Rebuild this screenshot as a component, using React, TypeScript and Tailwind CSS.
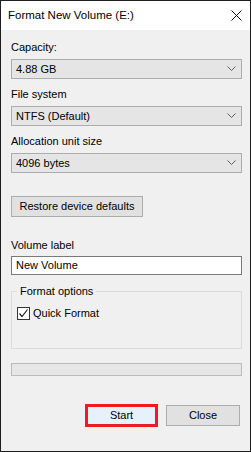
import React from 'react';

// Windows 10 style "Format" dialog
const FONT = "font-['Liberation_Sans',Arial,sans-serif]";

const Chevron = () => (
  <svg width="9" height="6" viewBox="0 0 9 6" className="shrink-0">
    <polyline points="0.5,0.5 4.5,4.5 8.5,0.5" fill="none" stroke="#5f5f5f" strokeWidth="1" />
  </svg>
);

function Combo({ label, value, first }: { label: string; value: string; first?: boolean }) {
  return (
    <div className={first ? 'flex flex-col' : 'flex flex-col mt-[7px]'}>
      <div className="h-[16px] leading-[16px]">{label}</div>
      <div className="mt-[4px] h-[20px] bg-[#e5e5e5] border border-[#adadad] flex items-center justify-between pl-[4px] pr-[5px]">
        <span>{value}</span>
        <Chevron />
      </div>
    </div>
  );
}

export default function App() {
  return (
    <div className={`w-[251px] h-[452px] border border-[#1e1e1e] bg-[#f0f0f0] flex flex-col text-[11px] text-black ${FONT}`}>
      {/* title bar */}
      <div className="h-[29px] bg-white flex items-center justify-between pl-[7px] pr-[8px] shrink-0">
        <span className="text-[11.5px]">Format New Volume (E:)</span>
        <svg width="11" height="11" viewBox="0 0 11 11">
          <path d="M0.5 0.5 L10.5 10.5 M10.5 0.5 L0.5 10.5" stroke="#111" strokeWidth="1" />
        </svg>
      </div>

      <div className="flex-1 flex flex-col pl-[10px] pr-[8px] pt-[9px]">
        <Combo label="Capacity:" value="4.88 GB" first />
        <Combo label="File system" value="NTFS (Default)" />
        <Combo label="Allocation unit size" value="4096 bytes" />

        <button className="mt-[23px] w-[132px] h-[21px] bg-[#e1e1e1] border border-[#adadad] flex items-center justify-center">
          Restore device defaults
        </button>

        <div className="mt-[20px] h-[16px] leading-[16px]">Volume label</div>
        <div className="mt-[3px] h-[19px] bg-white border border-[#7a7a7a] flex items-center pl-[4px]">
          New Volume
        </div>

        <fieldset className="mt-[8px] border border-[#dcdcdc] px-[5px] pb-[27px]">
          <legend className="px-[3px] h-[16px] leading-[16px]">Format options</legend>
          <label className="mt-[6px] h-[16px] flex items-center gap-[3px]">
            <span className="w-[13px] h-[13px] border border-[#333] bg-white flex items-center justify-center">
              <svg width="11" height="11" viewBox="0 0 11 11">
                <polyline points="1.5,5.5 4,8.5 9.5,1.5" fill="none" stroke="#222" strokeWidth="1.2" />
              </svg>
            </span>
            <span>Quick Format</span>
          </label>
        </fieldset>

        {/* progress */}
        <div className="mt-[14px] h-[13px] bg-[#e6e6e6] border border-[#bcbcbc]" />

        <div className="mt-[28px] flex items-center justify-end gap-[8px] pr-[2px]">
          <div className="w-[73px] h-[23px] border-[3px] border-[#ed1c24] flex">
            <button className="flex-1 bg-[#e5f1fb] flex items-center justify-center">Start</button>
          </div>
          <button className="w-[74px] h-[21px] bg-[#e1e1e1] border border-[#adadad] flex items-center justify-center">
            Close
          </button>
        </div>
      </div>
    </div>
  );
}
